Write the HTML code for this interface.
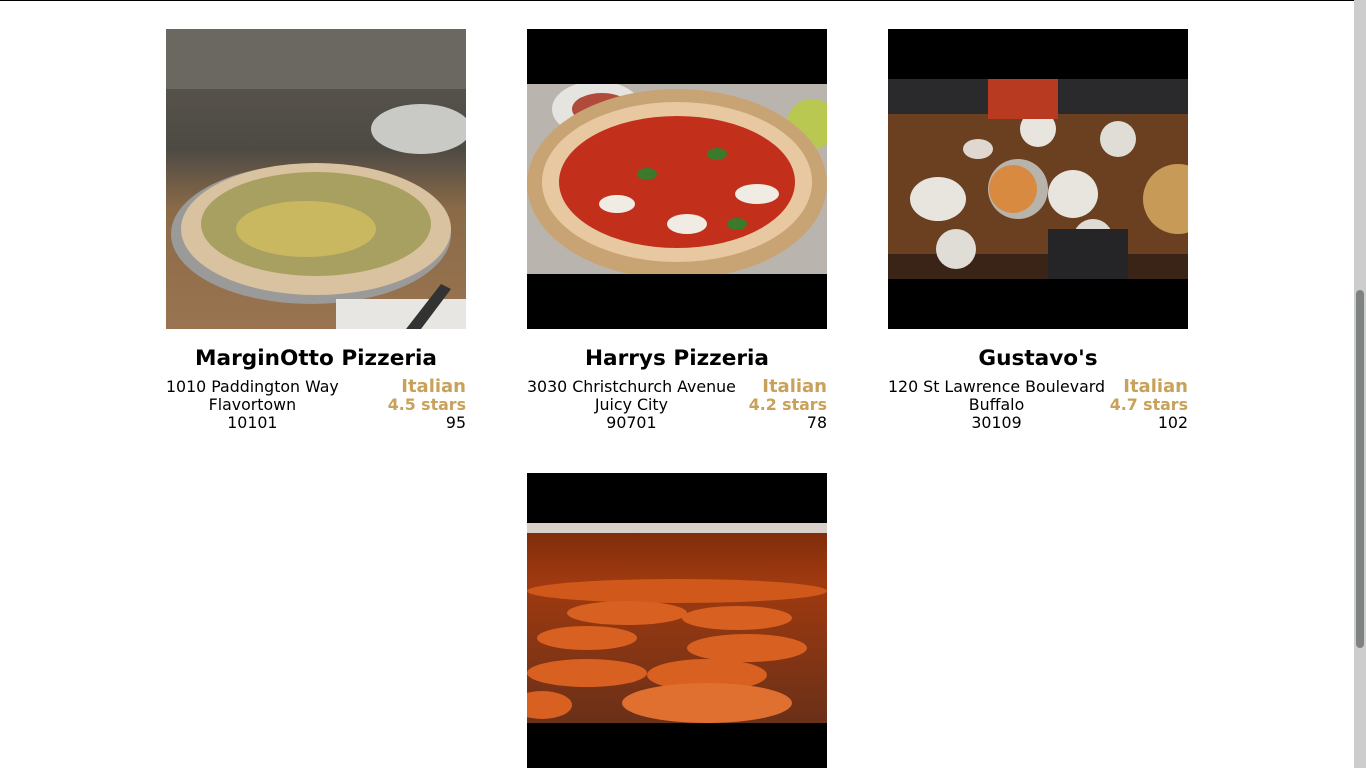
<!DOCTYPE html>
<html><head><meta charset="utf-8"><style>
html,body{margin:0;padding:0;background:#fff;overflow:hidden;width:1366px;height:768px}
body{font-family:"DejaVu Sans","Liberation Sans",sans-serif;position:relative}
.top{position:absolute;left:0;top:0;width:1354px;height:1px;background:#000}
.card{position:absolute;width:300px}
.img{width:300px;height:300px;background:#000;position:relative;overflow:hidden}
.img svg{position:absolute;left:0}
h2{margin:0;text-align:center;font-size:21.6px;font-weight:bold;line-height:26px;margin-top:17px;white-space:nowrap}
.info{display:flex;justify-content:space-between;margin-top:6px}
.addr{font-size:15.8px;line-height:18px;text-align:center;white-space:nowrap}
.meta{text-align:right;font-size:15.8px;line-height:18px;white-space:nowrap}
.gold{color:#c8a15a;font-weight:bold}
.cu{font-size:18px}
.sb{position:absolute;left:1354px;top:0;width:12px;height:768px;background:#cdcdcd}
.th{position:absolute;left:1356px;top:290px;width:8px;height:358px;background:#7f8380;border-radius:4px}
</style></head><body>
<div class="top"></div>

<div class="card" style="left:166px;top:29px">
<div class="img">
<svg width="300" height="300" viewBox="0 0 300 300">
<defs><linearGradient id="w" x1="0" y1="0" x2="0" y2="1"><stop offset="0" stop-color="#5f5a52"/><stop offset=".4" stop-color="#4d4a44"/><stop offset=".6" stop-color="#8b6a48"/><stop offset="1" stop-color="#9a7450"/></linearGradient></defs>
<rect width="300" height="300" fill="url(#w)"/>
<rect x="0" y="0" width="300" height="60" fill="#6b6862"/>
<ellipse cx="255" cy="100" rx="50" ry="25" fill="#c9c9c5"/>
<ellipse cx="145" cy="205" rx="140" ry="70" fill="#9a9a98"/>
<ellipse cx="150" cy="200" rx="135" ry="66" fill="#d8c2a0"/>
<ellipse cx="150" cy="195" rx="115" ry="52" fill="#a8a060"/>
<ellipse cx="140" cy="200" rx="70" ry="28" fill="#c9b860"/>
<rect x="170" y="270" width="130" height="30" fill="#e8e6e2"/>
<path d="M240 300 L275 255 L285 260 L255 300Z" fill="#333"/>
</svg></div>
<h2>MarginOtto Pizzeria</h2>
<div class="info"><div class="addr">1010 Paddington Way<br>Flavortown<br>10101</div>
<div class="meta"><span class="gold cu">Italian</span><br><span class="gold">4.5 stars</span><br>95</div></div>
</div>

<div class="card" style="left:527px;top:29px">
<div class="img">
<svg width="300" height="190" viewBox="0 0 300 190" style="top:55px">
<rect width="300" height="190" fill="#b9b5ae"/>
<ellipse cx="70" cy="25" rx="45" ry="28" fill="#e6e4e0"/>
<ellipse cx="75" cy="25" rx="30" ry="16" fill="#b04a3a"/>
<ellipse cx="285" cy="40" rx="25" ry="25" fill="#b8c850"/>
<ellipse cx="150" cy="100" rx="150" ry="95" fill="#c8a474"/>
<ellipse cx="150" cy="98" rx="135" ry="80" fill="#e8c8a0"/>
<ellipse cx="150" cy="98" rx="118" ry="66" fill="#c2301c"/>
<ellipse cx="160" cy="140" rx="20" ry="10" fill="#f0ece4"/>
<ellipse cx="230" cy="110" rx="22" ry="10" fill="#f0ece4"/>
<ellipse cx="90" cy="120" rx="18" ry="9" fill="#f0ece4"/>
<ellipse cx="120" cy="90" rx="10" ry="6" fill="#3a7a2a"/>
<ellipse cx="190" cy="70" rx="10" ry="6" fill="#3a7a2a"/>
<ellipse cx="210" cy="140" rx="10" ry="6" fill="#3a7a2a"/>
</svg></div>
<h2>Harrys Pizzeria</h2>
<div class="info"><div class="addr">3030 Christchurch Avenue<br>Juicy City<br>90701</div>
<div class="meta"><span class="gold cu">Italian</span><br><span class="gold">4.2 stars</span><br>78</div></div>
</div>

<div class="card" style="left:888px;top:29px">
<div class="img">
<svg width="300" height="200" viewBox="0 0 300 200" style="top:50px">
<rect width="300" height="200" fill="#6a4020"/>
<rect width="300" height="35" fill="#2a2a2c"/>
<rect y="175" width="300" height="25" fill="#3a2418"/>
<circle cx="130" cy="110" r="30" fill="#b8b4ac"/>
<circle cx="125" cy="110" r="24" fill="#d88a40"/>
<ellipse cx="50" cy="120" rx="28" ry="22" fill="#e8e4de"/>
<ellipse cx="185" cy="115" rx="25" ry="24" fill="#e8e4de"/>
<circle cx="68" cy="170" r="20" fill="#e0dcd6"/>
<circle cx="150" cy="50" r="18" fill="#e8e4de"/>
<circle cx="230" cy="60" r="18" fill="#e0dcd6"/>
<circle cx="290" cy="120" r="35" fill="#c89a58"/>
<circle cx="205" cy="160" r="20" fill="#dedad4"/>
<ellipse cx="90" cy="70" rx="15" ry="10" fill="#e0d8d0"/>
<rect x="160" y="150" width="80" height="50" fill="#252528"/>
<rect x="100" y="0" width="70" height="40" fill="#b83a20"/>
</svg></div>
<h2>Gustavo's</h2>
<div class="info"><div class="addr">120 St Lawrence Boulevard<br>Buffalo<br>30109</div>
<div class="meta"><span class="gold cu">Italian</span><br><span class="gold">4.7 stars</span><br>102</div></div>
</div>

<div class="card" style="left:527px;top:473px">
<div class="img">
<svg width="300" height="200" viewBox="0 0 300 200" style="top:50px">
<defs><linearGradient id="o" x1="0" y1="0" x2="0" y2="1"><stop offset="0" stop-color="#7a2a0a"/><stop offset=".3" stop-color="#a03a10"/><stop offset="1" stop-color="#6a3018"/></linearGradient></defs>
<rect width="300" height="200" fill="url(#o)"/>
<rect width="300" height="10" fill="#d8d0c8"/>
<ellipse cx="150" cy="68" rx="150" ry="12" fill="#d0581a"/>
<ellipse cx="100" cy="90" rx="60" ry="12" fill="#d86020"/>
<ellipse cx="210" cy="95" rx="55" ry="12" fill="#d86020"/>
<ellipse cx="60" cy="115" rx="50" ry="12" fill="#d86020"/>
<ellipse cx="220" cy="125" rx="60" ry="14" fill="#d86020"/>
<ellipse cx="60" cy="150" rx="60" ry="14" fill="#d86020"/>
<ellipse cx="180" cy="152" rx="60" ry="16" fill="#d86020"/>
<ellipse cx="180" cy="180" rx="85" ry="20" fill="#e07030"/>
<ellipse cx="15" cy="182" rx="30" ry="14" fill="#d86020"/>
</svg></div>
</div>

<div class="sb"></div><div class="th"></div>
</body></html>
